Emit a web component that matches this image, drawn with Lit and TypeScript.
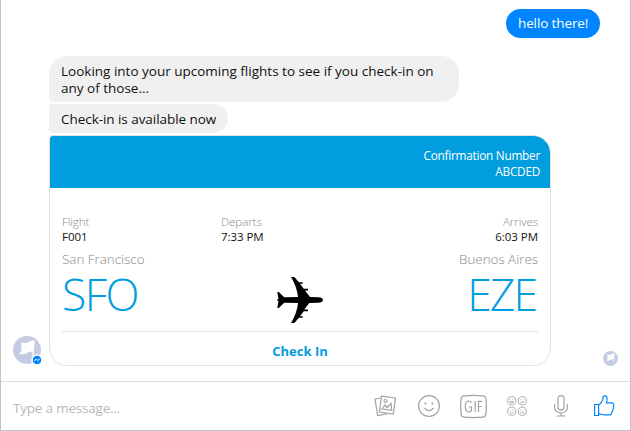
import { LitElement, html, css, svg } from "lit";
import { customElement } from "lit/decorators.js";

const flag = svg`<path d="M8 6.200c2.600 1.300 5 .9 7.200.1 1.900-.8 3.300-1.600 4.900-2.300l1.600.4-1.300 16-1.300-.1.400-4.800c-2-.3-3.800.6-5.500 1.500-2.400 1.200-4.700 1.500-8 .9 1.100-1.200 2-2.200 2.500-3.500.3-2.600 0-5.200-.5-8.200z" fill="#fff"/>`;

@customElement("app-root")
export class AppRoot extends LitElement {
  static styles = css`
    :host {
      display: block;
      font-family: "Open Sans", "Noto Sans", sans-serif;
      font-size: 13.5px;
      line-height: 17px;
      color: #111;
    }
    * { box-sizing: border-box; }
    svg { display: block; overflow: visible; }
    .window {
      height: 431px;
      display: flex;
      flex-direction: column;
      background: #fff;
      border: solid #c4c4c4;
      border-width: 0 1px 1px;
      white-space: nowrap;
      overflow: hidden;
    }
    .thread { height: 381px; padding-top: 9px; display: flex; flex-direction: column; }
    .mine {
      align-self: flex-end;
      margin-right: 30px;
      width: 94px;
      height: 29px;
      padding: 6px 0 0 12px;
      border-radius: 15px;
      background: #0084ff;
      color: #fff;
      letter-spacing: -0.12px;
    }
    .incoming { display: flex; margin-top: 18px; align-items: flex-end; }
    .avatar { position: relative; width: 28px; margin: 0 8px 2px 12px; }
    .badge { position: absolute; left: 18px; top: 18px; }
    .messages { width: 502px; display: flex; flex-direction: column; gap: 2px; }
    .bubble { background: #f0f0f0; padding: 7px 0 0 12px; }
    .b1 { width: 410px; height: 46px; border-radius: 18px 18px 18px 4px; }
    .b2 { width: 179px; height: 29px; border-radius: 4px 15px 15px 4px; letter-spacing: -0.05px; }
    .card {
      height: 231px;
      border: 1px solid #e2e2e5;
      border-radius: 4px 18px 18px 18px;
      overflow: hidden;
    }
    .head {
      height: 52px;
      padding: 12px 10px 0;
      background: #009ddf;
      color: #fff;
      font-size: 11.8px;
      letter-spacing: -0.25px;
      line-height: 15.5px;
      text-align: right;
    }
    .body { padding: 26px 12px 0; }
    .facts { display: grid; grid-template-columns: 159px 1fr auto; font-size: 11.5px; line-height: 15px; letter-spacing: -0.05px; }
    .end { text-align: right; }
    .label { color: #888; font-weight: 300; }
    .cities { display: flex; justify-content: space-between; margin-top: 7px; font-size: 13.4px; color: #888; font-weight: 300; }
    .route { display: flex; justify-content: space-between; height: 64px; color: #009ddf; border-bottom: 1px solid #e2e2e5; }
    .code { width: 78px; font-size: 44.5px; line-height: 52px; font-weight: 300; letter-spacing: -1.6px; }
    .to { display: flex; justify-content: flex-end; padding-right: 2px; letter-spacing: -2px; }
    .plane { margin-top: 9px; }
    .action { height: 35px; padding-top: 11px; text-align: center; color: #009ddf; font-weight: 700; font-size: 13px; }
    .seen { margin: 0 12px 0 auto; }
    .composer { height: 49px; border-top: 1px solid #dedede; display: flex; align-items: center; padding: 0 14px 0 12px; }
    .hint { color: #b8b8b8; flex: 1; padding-top: 5px; letter-spacing: -0.2px; }
    .tools { display: grid; grid-template-columns: 44px 42px 47px 47px 40px 22px; align-items: center; }
  `;

  private face(x: number, y: number, mouth: string) {
    return svg`<g transform="translate(${x} ${y})"><circle r="4.100"/><path d="M-1.500-1.500v1M1.500-1.500v1${mouth}"/></g>`;
  }

  render() {
    return html`
      <div class="window">
        <div class="thread">
          <div class="mine">hello there!</div>
          <div class="incoming">
            <div class="avatar">
              <svg width="28" height="28" viewBox="0 0 28 28"><circle cx="14" cy="14" r="14" fill="#c5cbe3"/>${flag}</svg>
              <svg class="badge" width="12" height="12" viewBox="0 0 12 12">
                <circle cx="6" cy="6" r="5" fill="#0084ff" stroke="#fff" stroke-width="1.500"/>
                <path d="M3.300 7 5.200 5l1.500 1.500L8.700 5" fill="none" stroke="#fff"/>
              </svg>
            </div>
            <div class="messages">
              <div class="bubble b1">Looking into your upcoming flights to see if you check-in on<br />any of those...</div>
              <div class="bubble b2">Check-in is available now</div>
              <div class="card">
                <div class="head">Confirmation Number<br />ABCDED</div>
                <div class="body">
                  <div class="facts">
                    <div><div class="label">Flight</div>F001</div>
                    <div><div class="label">Departs</div>7:33 PM</div>
                    <div class="end"><div class="label">Arrives</div>6:03 PM</div>
                  </div>
                  <div class="cities"><span>San Francisco</span><span>Buenos Aires</span></div>
                  <div class="route">
                    <span class="code">SFO</span>
                    <svg class="plane" width="47" height="46" viewBox="0 0 47 46">
                      <path d="M14 0h3.300l4.700 5.300h3.700v1.500h-2.700l3.800 5h4.200v1.700h-3l5 6.500 8.700.3Q46 20.700 46 23t-5 2.700l-8.700.3-5 6.500H31v1.700h-4.200l-3.800 5h2.700v1.500H22L17.300 46H14q6-10 7-20.100L7.200 25.700 1.900 31H.3l1.200-7.200H.3v-1.600h1.200L.3 15h1.600l5.300 5.300 13.800-.2Q20 10 14 0z" fill="#000"/>
                    </svg>
                    <span class="code to">EZE</span>
                  </div>
                  <div class="action">Check In</div>
                </div>
              </div>
            </div>
            <svg class="seen" width="15" height="15" viewBox="0 0 28 28"><circle cx="14" cy="14" r="14" fill="#c5cbe3"/>${flag}</svg>
          </div>
        </div>
        <div class="composer">
          <div class="hint">Type a message...</div>
          <div class="tools">
            <svg width="23" height="22" viewBox="0 0 23 22" fill="none" stroke="#a3a3a3" stroke-width="1.200">
              <path d="M6.500 3 1 4.200l2.600 16.300 9.400-1.700M7.500 1.200l14 1.800-2.200 16-13.800-1.900z"/>
              <circle cx="11.500" cy="6" r="1.500"/><path d="m8 14 3-4 2.300 2.500L17 8.500l.7 6.800z"/>
            </svg>
            <svg width="22" height="22" viewBox="0 0 22 22" fill="none" stroke="#a3a3a3" stroke-width="1.200">
              <circle cx="11" cy="11" r="10.400"/><path d="M6.500 13q4.500 5.500 9 0"/>
              <circle cx="7.500" cy="8.500" r=".5"/><circle cx="14.500" cy="8.500" r=".5"/>
            </svg>
            <svg width="27" height="23" viewBox="0 0 27 23" fill="none" stroke="#a3a3a3" stroke-width="1.200">
              <path d="M4 .8Q13.500 0 23 .8q2.500.2 3 3 .7 7.700 0 15.400-.5 2.800-3 3-9.500.8-19 0-2.500-.2-3-3-.7-7.700 0-15.400.5-2.800 3-3z"/>
              <path d="M11.500 8Q10.500 6 8.500 6 5.300 6.300 5.300 11.500T8.500 17q3 0 3-2.500V12H8.800M15.200 6v11M22 6.300h-3.500V17M18.500 11.500h3"/>
            </svg>
            <svg width="20" height="20" viewBox="0 0 20 20" fill="none" stroke="#999" stroke-width=".8">
              ${this.face(4.7, 4.8, "M-2 1h4q-2 2.500-4 0")}${this.face(15.3, 4.8, "M-2 2 2 .8")}
              ${this.face(4.7, 15.2, "M-2 1q2 2 4 0")}${this.face(15.3, 15.2, "M-2 2q2-2 4 0")}
            </svg>
            <svg width="14" height="22" viewBox="0 0 14 22" fill="none" stroke="#a3a3a3" stroke-width="1.200">
              <rect x="4" y=".6" width="6" height="14.500" rx="3"/><path d="M.6 9v3.500a6.400 5.500 0 0 0 12.800 0V9M7 18v3M2.500 21h9"/>
            </svg>
            <svg width="21" height="22" viewBox="0 0 21 22" fill="none" stroke="#0084ff" stroke-width="1.200">
              <path d="M.6 9.500h4v11h-4zM4.600 18.500q3 1.400 6 1.400h5q2.500-.1 2-2.600 1.800-1 1.200-3 1.400-1.400.6-3 1.200-3-1.800-3.500h-5q1-3.500.2-6Q11 .4 9.200 1.400q-.1 4-2 6-1.200 2-2.600 2.600"/>
            </svg>
          </div>
        </div>
      </div>
    `;
  }
}
